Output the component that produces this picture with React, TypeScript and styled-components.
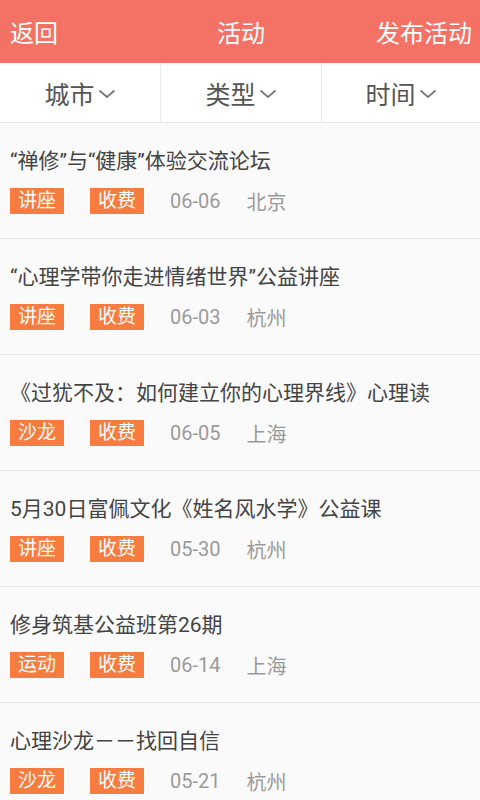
import styled, { createGlobalStyle } from "styled-components";

const GlobalStyle = createGlobalStyle`
  html, body {
    margin: 0;
    padding: 0;
    height: 800px;
    overflow: hidden;
    background: #fafafa;
  }
  body {
    font-family: "Roboto", "Noto Sans CJK SC", sans-serif;
  }
`;

const Page = styled.div`
  width: 480px;
  height: 800px;
  overflow: hidden;
  background: #fafafa;
`;

const Header = styled.header`
  height: 63px;
  background: #f47265;
  display: grid;
  grid-template-columns: 1fr auto 1fr;
  align-items: center;
  padding: 0 8px 0 10px;
  color: #fff;
  font-size: 24px;
`;

const HeaderLeft = styled.span`
  justify-self: start;
`;

const HeaderTitle = styled.span`
  justify-self: center;
`;

const HeaderRight = styled.span`
  justify-self: end;
`;

const FilterBar = styled.nav`
  height: 59px;
  background: #fff;
  border-bottom: 1px solid #e4e4e4;
  display: grid;
  grid-template-columns: 160px 161px 1fr;
`;

const Filter = styled.div<{ $divider?: boolean }>`
  display: flex;
  align-items: center;
  justify-content: center;
  font-size: 25px;
  color: #555;
  border-left: ${(p) => (p.$divider ? "1px solid #e8e8e8" : "none")};
`;

const Chevron = styled.svg`
  width: 18px;
  height: 10px;
  margin-left: 3px;
  margin-top: 2px;
`;

const List = styled.ul`
  list-style: none;
  margin: 0;
  padding: 0;
`;

const Item = styled.li`
  height: 116px;
  box-sizing: border-box;
  border-bottom: 1px solid #e6e6e6;
  padding: 24px 10px 0;
`;

const Title = styled.div`
  font-size: 21px;
  line-height: 28px;
  color: #444;
  white-space: nowrap;
  overflow: hidden;
`;

const Meta = styled.div`
  margin-top: 13px;
  display: flex;
  align-items: center;
  gap: 26px;
  height: 26px;
`;

const Tag = styled.span`
  width: 54px;
  height: 26px;
  line-height: 26px;
  text-align: center;
  background: #f67d3f;
  color: #fff;
  font-size: 19px;
`;

const Info = styled.span`
  font-size: 20px;
  color: #9a9a9a;
`;

const events = [
  { title: "“禅修”与“健康”体验交流论坛", type: "讲座", date: "06-06", city: "北京" },
  { title: "“心理学带你走进情绪世界”公益讲座", type: "讲座", date: "06-03", city: "杭州" },
  { title: "《过犹不及：如何建立你的心理界线》心理读", type: "沙龙", date: "06-05", city: "上海" },
  { title: "5月30日富佩文化《姓名风水学》公益课", type: "讲座", date: "05-30", city: "杭州" },
  { title: "修身筑基公益班第26期", type: "运动", date: "06-14", city: "上海" },
  { title: "心理沙龙－－找回自信", type: "沙龙", date: "05-21", city: "杭州" },
];

function Arrow() {
  return (
    <Chevron viewBox="0 0 18 10">
      <path d="M1.5 1.5 L9 8 L16.5 1.5" fill="none" stroke="#777" strokeWidth="1.8" />
    </Chevron>
  );
}

function App() {
  const filters = ["城市", "类型", "时间"];
  return (
    <Page>
      <GlobalStyle />
      <Header>
        <HeaderLeft>返回</HeaderLeft>
        <HeaderTitle>活动</HeaderTitle>
        <HeaderRight>发布活动</HeaderRight>
      </Header>
      <FilterBar>
        {filters.map((f, i) => (
          <Filter key={f} $divider={i > 0}>
            {f}
            <Arrow />
          </Filter>
        ))}
      </FilterBar>
      <List>
        {events.map((e) => (
          <Item key={e.title}>
            <Title>{e.title}</Title>
            <Meta>
              <Tag>{e.type}</Tag>
              <Tag>收费</Tag>
              <Info>{e.date}</Info>
              <Info>{e.city}</Info>
            </Meta>
          </Item>
        ))}
      </List>
    </Page>
  );
}

export default App;
